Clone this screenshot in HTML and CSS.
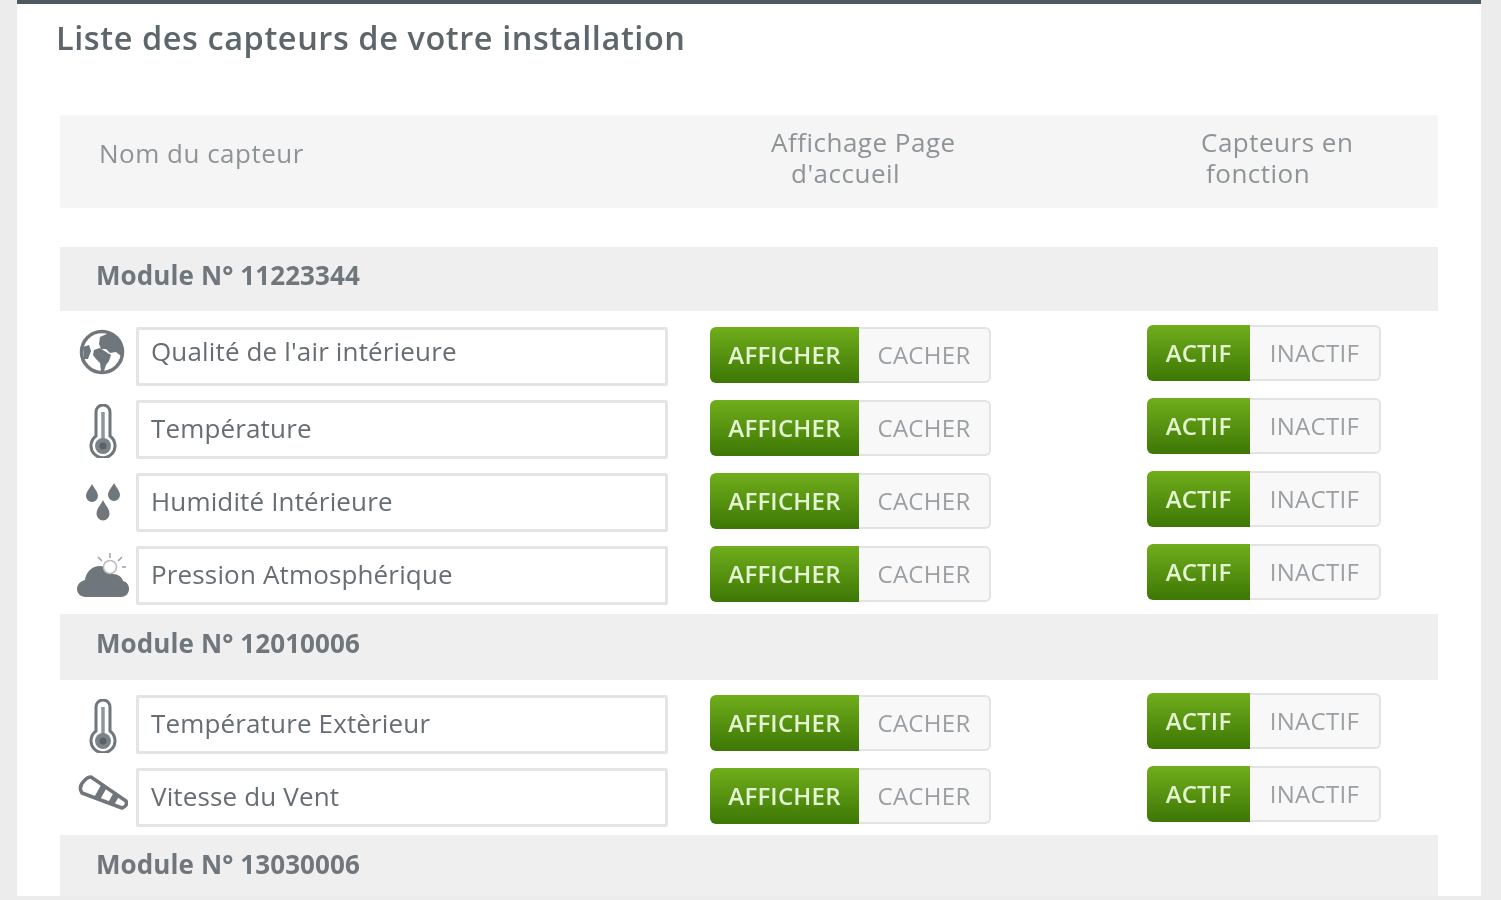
FILE: index.html
```html
<!DOCTYPE html>
<html lang="fr">
<head>
    <meta charset="utf-8" />
    <title>Liste des capteurs</title>
    <link rel="stylesheet" href="styles.css">
</head>
<body>
    <svg class="defs" width="0" height="0" aria-hidden="true">
        <symbol id="icon-thermo" viewBox="0 0 30 54">
            <path d="M8 32V8a7 7 0 0 1 14 0v24a12 12 0 1 1-14 0z" fill="#fff" stroke="#6f777c" stroke-width="3"/>
            <path d="M15 8v30" stroke="#8f969a" stroke-width="3.500"/>
            <circle cx="15" cy="42" r="8" fill="#7b8387"/>
            <circle cx="15" cy="42" r="3.500" fill="#59626a"/>
        </symbol>
    </svg>
    <main class="panel">
        <h1 class="panel-title">Liste des capteurs de votre installation</h1>

        <div class="table-head">
            <div class="head-name">Nom du capteur</div>
            <div class="head-display"><span class="head-first">Affichage Page</span><span class="head-second">d'accueil</span></div>
            <div class="head-state"><span class="head-first">Capteurs en</span><span class="head-second">fonction</span></div>
        </div>

        <!-- Module 1 -->
        <div class="module-title module-first">Module N° 11223344</div>

        <div class="sensor-row">
            <div class="sensor-icon">
                <svg class="icon-globe" width="46" height="46" viewBox="0 0 46 46">
                    <circle cx="23" cy="23" r="20.500" fill="#fff" stroke="#6f777c" stroke-width="3.500"/>
                    <path d="M21 8l9-4 10 6 4 10-2 7-5-4-6 1-4-4h-5l-2-5z" fill="#6f777c"/>
                    <path d="M15 21l6-2 6 4 5 3-2 6-3 4-2 6h-3l-1-8-4-4-3-4z" fill="#6f777c"/>
                    <path d="M4 18l6-2 2 6-3 8-4 0z" fill="#6f777c"/>
                </svg>
            </div>
            <input class="sensor-input sensor-input-high" type="text" value="Qualité de l'air intérieure" />
            <div class="toggle toggle-display"><span class="toggle-on">AFFICHER</span><span class="toggle-off">CACHER</span></div>
            <div class="toggle toggle-state"><span class="toggle-on">ACTIF</span><span class="toggle-off">INACTIF</span></div>
        </div>

        <div class="sensor-row">
            <div class="sensor-icon"><svg class="icon-thermo" width="30" height="54"><use href="#icon-thermo"/></svg></div>
            <input class="sensor-input" type="text" value="Température" />
            <div class="toggle toggle-display"><span class="toggle-on">AFFICHER</span><span class="toggle-off">CACHER</span></div>
            <div class="toggle toggle-state"><span class="toggle-on">ACTIF</span><span class="toggle-off">INACTIF</span></div>
        </div>

        <div class="sensor-row">
            <div class="sensor-icon">
                <svg width="38" height="38" viewBox="0 0 38 38" fill="#6f777c">
                    <path d="M8 1c2 4 6 8 6 12a6 6 0 0 1-12 0c0-4 4-8 6-12z"/>
                    <path d="M30 0c2 4 6 8 6 12a6 6 0 0 1-12 0c0-4 4-8 6-12z"/>
                    <path d="M19 17c2 5 6.500 8 6.500 14a6.500 6.500 0 0 1-13 0c0-6 4.500-9 6.500-14z"/>
                </svg>
            </div>
            <input class="sensor-input" type="text" value="Humidité Intérieure" />
            <div class="toggle toggle-display"><span class="toggle-on">AFFICHER</span><span class="toggle-off">CACHER</span></div>
            <div class="toggle toggle-state"><span class="toggle-on">ACTIF</span><span class="toggle-off">INACTIF</span></div>
        </div>

        <div class="sensor-row sensor-row-last">
            <div class="sensor-icon">
                <svg width="52" height="46" viewBox="0 0 52 46">
                    <path d="M9 45C3 45 0 41 0 37c0-5 4-8 8-9 1-8 7-14 15-14 6 0 10 3 13 8 5 0 9 3 10 7 4 1 6 4 6 8 0 5-4 8-8 8z" fill="#6f777c"/>
                    <path d="M33 1v5M21 5l4 4M45 5l-4 4M49 15h-4" stroke="#9aa0a4" stroke-width="1.500" fill="none"/>
                    <circle cx="33" cy="15" r="6.500" fill="#fff" stroke="#b9bdc0" stroke-width="1.500"/>
                </svg>
            </div>
            <input class="sensor-input" type="text" value="Pression Atmosphérique" />
            <div class="toggle toggle-display"><span class="toggle-on">AFFICHER</span><span class="toggle-off">CACHER</span></div>
            <div class="toggle toggle-state"><span class="toggle-on">ACTIF</span><span class="toggle-off">INACTIF</span></div>
        </div>

        <!-- Module 2 -->
        <div class="module-title">Module N° 12010006</div>

        <div class="sensor-row">
            <div class="sensor-icon"><svg class="icon-thermo" width="30" height="54"><use href="#icon-thermo"/></svg></div>
            <input class="sensor-input" type="text" value="Température Extèrieur" />
            <div class="toggle toggle-display"><span class="toggle-on">AFFICHER</span><span class="toggle-off">CACHER</span></div>
            <div class="toggle toggle-state"><span class="toggle-on">ACTIF</span><span class="toggle-off">INACTIF</span></div>
        </div>

        <div class="sensor-row sensor-row-last">
            <div class="sensor-icon">
                <svg class="icon-wind" width="50" height="36" viewBox="0 0 50 36">
                    <path d="M13 2L48 26Q50 31 44 33L4 18Q0 12 6 6Q9 2 13 2z" fill="#fff" stroke="#6f777c" stroke-width="3.500" stroke-linejoin="round"/>
                    <path d="M23.500 9.200L28.750 12.800 22 24.750 16 22.500zM35.750 17.600L41 21.200 36 30 30 27.750z" fill="#6f777c"/>
                </svg>
            </div>
            <input class="sensor-input" type="text" value="Vitesse du Vent" />
            <div class="toggle toggle-display"><span class="toggle-on">AFFICHER</span><span class="toggle-off">CACHER</span></div>
            <div class="toggle toggle-state"><span class="toggle-on">ACTIF</span><span class="toggle-off">INACTIF</span></div>
        </div>

        <!-- Module 3 -->
        <div class="module-title module-last">Module N° 13030006</div>
    </main>
</body>
</html>
```

FILE: styles.css
```css
* {
    box-sizing: border-box;
    margin: 0;
    padding: 0;
}

html,
body {
    height: 100%;
}

body {
    background-color: #ececec;
    font-family: "Open Sans", sans-serif;
    color: #6a7378;
    overflow: hidden;
}

.defs {
    display: block;
    height: 0;
}

.panel {
    height: 896px;
    margin: 0 20px 0 17px;
    padding: 0 43px;
    background-color: #fff;
    border-top: 4px solid #4f5a60;
    overflow: hidden;
    filter: blur(0.6px);
}

.panel-title {
    margin: 12px 0 0 -4px;
    height: 99px;
    font-size: 32.500px;
    line-height: 44px;
    font-weight: 600;
    letter-spacing: 0.57px;
    color: #5d666b;
}

.table-head {
    display: flex;
    height: 93px;
    background-color: #f5f5f5;
    border-radius: 3px;
    color: #8d9498;
    font-size: 26px;
    line-height: 31px;
    letter-spacing: 0.5px;
}

.head-name {
    width: 711px;
    padding: 23px 0 0 39px;
}

.head-display {
    width: 430px;
    padding-top: 12px;
}

.head-first,
.head-second {
    display: block;
}

.head-display .head-second {
    margin-left: 20px;
}

.head-state {
    padding-top: 12px;
}

.head-state .head-second {
    margin-left: 5px;
}

.module-title {
    height: 66px;
    margin-bottom: 15px;
    padding: 11px 0 0 36px;
    background-color: #efefef;
    font-size: 26px;
    line-height: 36px;
    font-weight: 700;
    letter-spacing: 0.1px;
    color: #6f777c;
}

.module-first {
    height: 64px;
    margin-top: 39px;
    margin-bottom: 16px;
    padding-top: 10px;
}

.module-last {
    height: 61px;
    margin-top: -1px;
    margin-bottom: 0;
}

.sensor-row {
    display: flex;
    align-items: flex-start;
    height: 73px;
}

.sensor-row-last {
    height: 68px;
}

.sensor-icon {
    width: 76px;
    height: 58px;
    padding-left: 10px;
    display: flex;
    align-items: center;
    justify-content: center;
}

.icon-globe {
    margin-top: -8px;
    margin-left: -2px;
}

.icon-thermo {
    margin-top: 3px;
}

.icon-wind {
    margin-top: -8px;
}

.sensor-input {
    width: 532px;
    height: 59px;
    padding: 0 12px 3px;
    border: 3px solid #e2e4e5;
    border-radius: 2px;
    background-color: #fff;
    font-family: "Open Sans", sans-serif;
    font-size: 26px;
    letter-spacing: 0.15px;
    color: #666e73;
    outline: none;
}

.sensor-input-high {
    padding-bottom: 12px;
}

.toggle {
    display: flex;
    height: 56px;
    font-size: 24px;
    font-weight: 600;
    line-height: 56px;
    text-align: center;
}

.toggle-display {
    margin-left: 42px;
    width: 281px;
}

.toggle-display .toggle-on {
    width: 149px;
}

.toggle-state {
    margin: -2px 0 0 156px;
    width: 234px;
}

.toggle-state .toggle-on {
    width: 103px;
}

.toggle-on {
    flex: none;
    color: #e4f4d2;
    background: linear-gradient(#70ae1c, #3d7705);
    border-radius: 6px 0 0 6px;
    letter-spacing: 0.2px;
}

.toggle-off {
    flex: 1;
    color: #9a9fa3;
    font-weight: 500;
    letter-spacing: 0.3px;
    background-color: #f8f8f8;
    border: 2px solid #e2e3e4;
    border-left: 0;
    border-radius: 0 6px 6px 0;
    line-height: 52px;
}
```
